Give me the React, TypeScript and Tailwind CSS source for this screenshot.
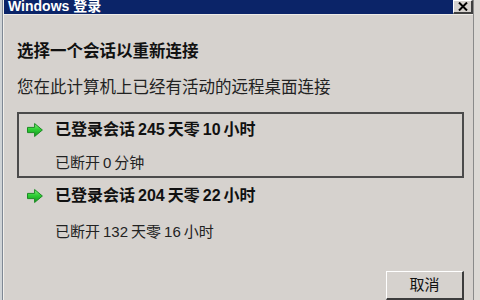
const FONT = { fontFamily: '"Liberation Sans", "Noto Sans CJK SC", sans-serif' };

function GreenArrow() {
  return (
    <svg width="18" height="16" viewBox="0 0 18 16" className="shrink-0">
      <defs>
        <linearGradient id="ga" x1="0" y1="0" x2="0" y2="1">
          <stop offset="0" stopColor="#8bf07f" />
          <stop offset="0.45" stopColor="#2fcf35" />
          <stop offset="1" stopColor="#12961c" />
        </linearGradient>
      </defs>
      <path
        d="M1.5 5.4 H8.6 V1.5 L16.4 8 L8.6 14.5 V10.6 H1.5 Z"
        fill="url(#ga)"
        stroke="#1c8a24"
        strokeWidth="1"
        strokeLinejoin="round"
      />
    </svg>
  );
}

type SessionProps = {
  days: number;
  hours: number;
  idle: React.ReactNode;
  selected?: boolean;
  subPad: string;
};

function Num({ children }: { children: React.ReactNode }) {
  return <span className="mx-[3px]">{children}</span>;
}

function SessionItem({ days, hours, idle, selected, subPad }: SessionProps) {
  return (
    <div className={`border-2 ${selected ? 'border-[#4b4b4b]' : 'border-transparent'}`}>
      <div className="flex h-[32px] items-center pl-[7px]">
        <GreenArrow />
        <div className="ml-[11px] text-[16px] font-bold leading-[20px] text-[#111]">
          已登录会话<Num>{days}</Num>天零<Num>{hours}</Num>小时
        </div>
      </div>
      <div className={`h-[30px] pl-[36px] text-[15px] leading-[20px] text-[#222] ${subPad}`}>{idle}</div>
    </div>
  );
}

export default function App() {
  return (
    <div className="flex h-[300px] w-[480px] overflow-hidden bg-[#d6d2ce]" style={FONT}>
      <div className="flex w-[4px] shrink-0">
        <div className="w-[2px] bg-[#cfd3d6]" />
        <div className="w-[1px] bg-[#7f8894]" />
        <div className="w-[1px] bg-[#f2f0ec]" />
      </div>
      <div className="flex w-[469px] flex-col">
        <div className="flex h-[14px] items-start justify-between bg-[#0b2468]">
          <div className="-mt-[3px] pl-[4px] text-[14px] font-bold leading-[18px] text-white">Windows 登录</div>
          <div className="flex h-[14px] w-[20px] items-center justify-center border-l border-t border-b-2 border-r-2 border-l-white border-t-white border-b-[#404040] border-r-[#404040] bg-[#d6d2ce]">
            <svg width="10" height="9" viewBox="0 0 10 9">
              <path d="M1 0.5 L9 8.5 M9 0.5 L1 8.5" stroke="#000" strokeWidth="2" />
            </svg>
          </div>
        </div>
        <div className="h-[1px] bg-[#eeece8]" />
        <div className="flex flex-1 flex-col pl-[13px]">
          <div className="mt-[26px] text-[16.5px] font-bold leading-[20px] text-[#111]">选择一个会话以重新连接</div>
          <div className="mt-[16px] text-[16.5px] leading-[20px] text-[#222]">您在此计算机上已经有活动的远程桌面连接</div>
          <div className="mt-[15px] w-[447px]">
            <SessionItem
              selected
              days={245}
              hours={10}
              subPad="pt-[7px]"
              idle={<>已断开<Num>0</Num>分钟</>}
            />
            <SessionItem
              days={204}
              hours={22}
              subPad="pt-[10px]"
              idle={<>已断开<Num>132</Num>天零<Num>16</Num>小时</>}
            />
          </div>
          <div className="mt-[27px] flex w-[447px] justify-end">
            <div className="flex h-[29px] w-[78px] items-center justify-center border-l border-t border-b-2 border-r-2 border-l-white border-t-white border-b-[#3c3c3c] border-r-[#3c3c3c] text-[15px] text-[#111]">
              取消
            </div>
          </div>
        </div>
      </div>
      <div className="flex flex-1">
        <div className="w-[1px] bg-[#8a8a8a]" />
        <div className="flex-1 bg-[#dcd9d5]" />
      </div>
    </div>
  );
}
